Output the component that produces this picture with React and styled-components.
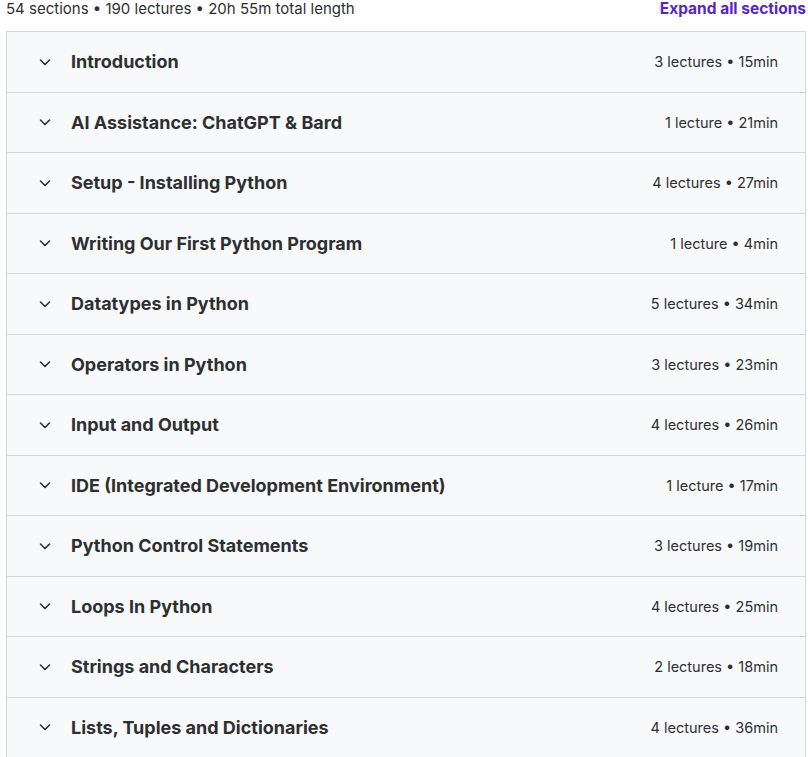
import React from "react";
import styled, { createGlobalStyle } from "styled-components";

const GlobalStyle = createGlobalStyle`
  html, body {
    margin: 0;
    padding: 0;
    background: #fff;
  }
  body {
    font-family: Inter, "Noto Sans", sans-serif;
    color: #2d2f31;
  }
`;

const sections = [
  { title: "Introduction", lectures: 3, length: "15min" },
  { title: "AI Assistance: ChatGPT & Bard", lectures: 1, length: "21min" },
  { title: "Setup - Installing Python", lectures: 4, length: "27min" },
  { title: "Writing Our First Python Program", lectures: 1, length: "4min" },
  { title: "Datatypes in Python", lectures: 5, length: "34min" },
  { title: "Operators in Python", lectures: 3, length: "23min" },
  { title: "Input and Output", lectures: 4, length: "26min" },
  { title: "IDE (Integrated Development Environment)", lectures: 1, length: "17min" },
  { title: "Python Control Statements", lectures: 3, length: "19min" },
  { title: "Loops In Python", lectures: 4, length: "25min" },
  { title: "Strings and Characters", lectures: 2, length: "18min" },
  { title: "Lists, Tuples and Dictionaries", lectures: 4, length: "36min" },
];

const Wrapper = styled.div`
  width: 800px;
  padding-left: 6px;
`;

const TopBar = styled.div`
  display: flex;
  justify-content: space-between;
  align-items: flex-start;
  height: 31px;
  line-height: 18px;
`;

const Summary = styled.span`
  font-size: 15px;
  color: #2d2f31;
`;

const ExpandAll = styled.button`
  background: transparent;
  border: none;
  padding: 0;
  font-family: inherit;
  font-size: 15.5px;
  line-height: 18px;
  font-weight: 700;
  color: #5624d0;
  cursor: pointer;
`;

const Panel = styled.div`
  border: 1px solid #d1d7dc;
  border-bottom: none;
`;

const Row = styled.div`
  display: flex;
  align-items: center;
  height: 59.5px;
  padding: 0 27px 0 32px;
  background: #f7f9fa;
  border-bottom: 1px solid #d1d7dc;
  cursor: pointer;
`;

const Chevron = styled.svg`
  width: 12px;
  height: 12px;
  flex-shrink: 0;
  margin-right: 20px;
`;

const Title = styled.h3`
  margin: 0;
  flex: 1;
  font-size: 18px;
  font-weight: 700;
  color: #2d2f31;
`;

const Meta = styled.span`
  font-size: 14.5px;
  color: #2d2f31;
`;

export default function App() {
  return (
    <>
      <GlobalStyle />
      <Wrapper>
        <TopBar>
          <Summary>54 sections • 190 lectures • 20h 55m total length</Summary>
          <ExpandAll type="button">Expand all sections</ExpandAll>
        </TopBar>
        <Panel>
          {sections.map((s) => (
            <Row key={s.title}>
              <Chevron viewBox="0 0 12 12">
                <polyline
                  points="1.5,4 6,8.5 10.5,4"
                  fill="none"
                  stroke="#2d2f31"
                  strokeWidth="1.6"
                  strokeLinecap="round"
                  strokeLinejoin="round"
                />
              </Chevron>
              <Title>{s.title}</Title>
              <Meta>
                {s.lectures} {s.lectures === 1 ? "lecture" : "lectures"} • {s.length}
              </Meta>
            </Row>
          ))}
        </Panel>
      </Wrapper>
    </>
  );
}
